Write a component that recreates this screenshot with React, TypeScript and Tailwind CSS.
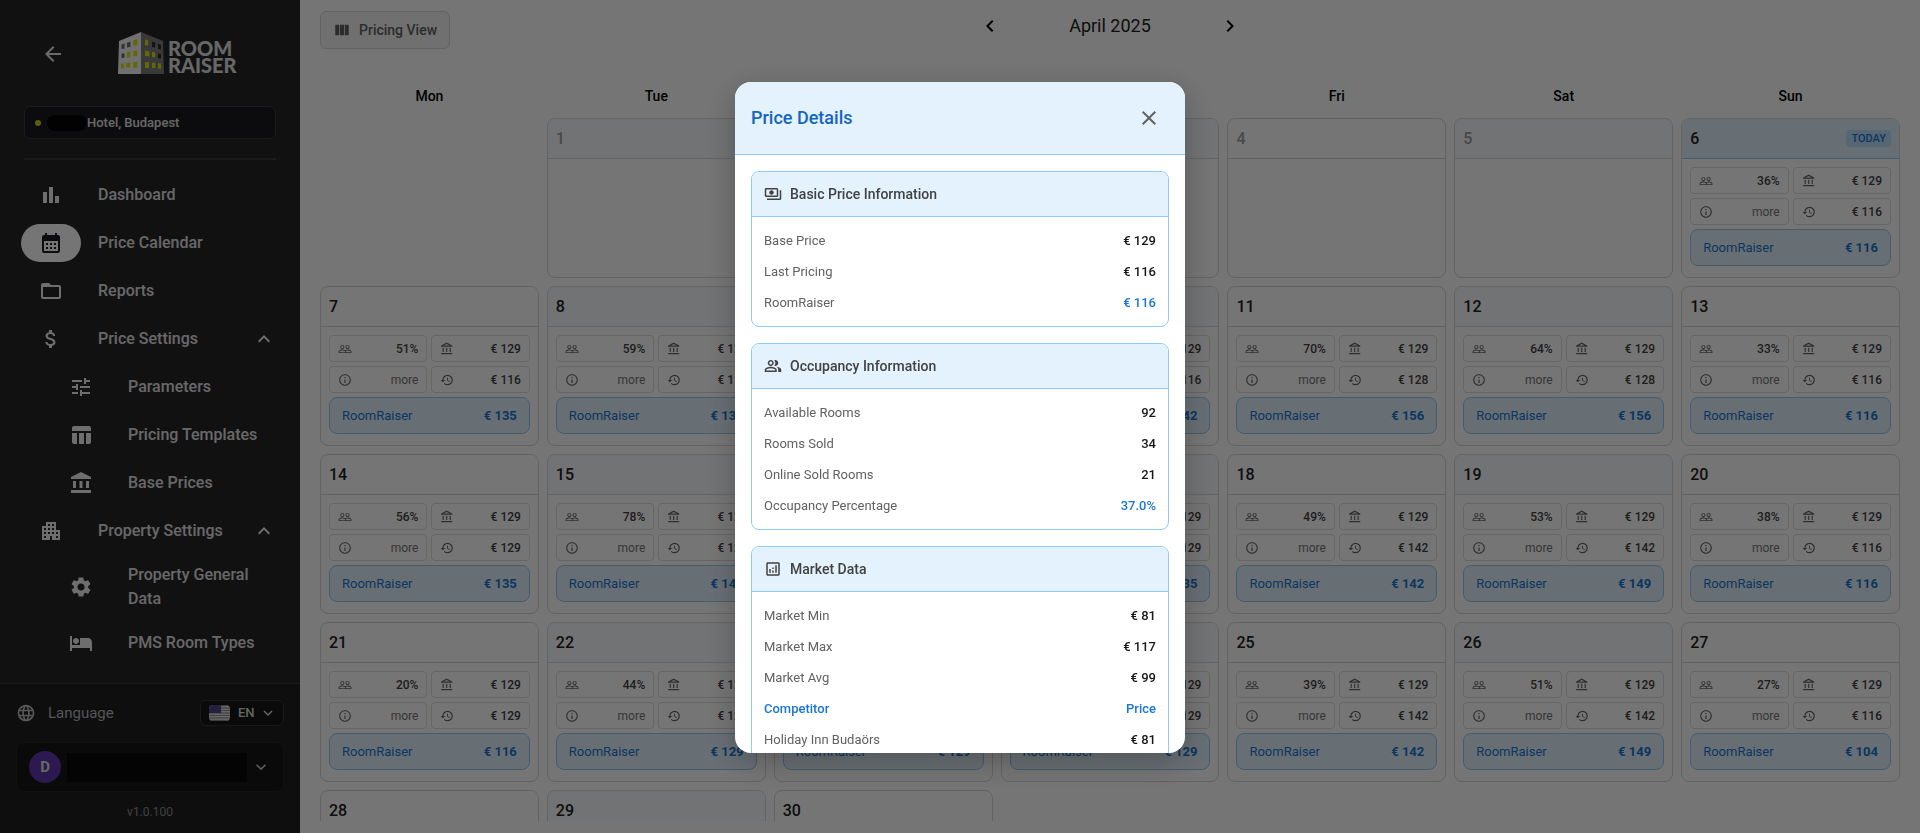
import type { ReactNode } from "react";
import type { IconType } from "react-icons";
import {
  MdAccountBalance,
  MdApartment,
  MdArrowBack,
  MdAttachMoney,
  MdBarChart,
  MdCalendarMonth,
  MdChevronLeft,
  MdChevronRight,
  MdClose,
  MdExpandLess,
  MdExpandMore,
  MdFolderOpen,
  MdHistory,
  MdHotel,
  MdInfoOutline,
  MdLanguage,
  MdOutlineAccountBalance,
  MdOutlineAnalytics,
  MdOutlinePayments,
  MdOutlinePeopleAlt,
  MdPeopleOutline,
  MdSettings,
  MdTableChart,
  MdTune,
  MdViewColumn,
} from "react-icons/md";

type NavItem = { label: string; icon: IconType; active?: boolean; children?: NavItem[] };

const nav: NavItem[] = [
  { label: "Dashboard", icon: MdBarChart },
  { label: "Price Calendar", icon: MdCalendarMonth, active: true },
  { label: "Reports", icon: MdFolderOpen },
  {
    label: "Price Settings",
    icon: MdAttachMoney,
    children: [
      { label: "Parameters", icon: MdTune },
      { label: "Pricing Templates", icon: MdTableChart },
      { label: "Base Prices", icon: MdAccountBalance },
    ],
  },
  {
    label: "Property Settings",
    icon: MdApartment,
    children: [
      { label: "Property General Data", icon: MdSettings },
      { label: "PMS Room Types", icon: MdHotel },
    ],
  },
];

const weekdays = ["Mon", "Tue", "Wed", "Thu", "Fri", "Sat", "Sun"];
const TODAY = 6;

type DayPrice = { occ: number; base: number; last: number; rr: number };

const p = (occ: number, base: number, last: number, rr: number): DayPrice => ({ occ, base, last, rr });

const prices: Record<number, DayPrice> = {
  6: p(36, 129, 116, 116),
  7: p(51, 129, 116, 135),
  8: p(59, 129, 116, 135),
  9: p(62, 129, 116, 135),
  10: p(66, 129, 116, 142),
  11: p(70, 129, 128, 156),
  12: p(64, 129, 128, 156),
  13: p(33, 129, 116, 116),
  14: p(56, 129, 129, 135),
  15: p(78, 129, 129, 149),
  16: p(60, 129, 129, 142),
  17: p(52, 129, 129, 135),
  18: p(49, 129, 142, 142),
  19: p(53, 129, 142, 149),
  20: p(38, 129, 116, 116),
  21: p(20, 129, 129, 116),
  22: p(44, 129, 129, 129),
  23: p(37, 129, 116, 129),
  24: p(41, 129, 129, 129),
  25: p(39, 129, 142, 142),
  26: p(51, 129, 142, 149),
  27: p(27, 129, 116, 104),
  28: p(22, 129, 129, 116),
  29: p(25, 129, 129, 116),
  30: p(31, 129, 129, 129),
};

function Logo() {
  return (
    <div className="flex items-center gap-1">
      <svg className="h-[42px] w-[46px]" viewBox="0 0 46 42" aria-hidden="true">
        <path d="M1 9 23 0v42H0z" fill="#f4f4f4" />
        <path d="M23 0l22 9 1 33H23z" fill="#7d7d7d" />
        <g fill="#6e6e6e">
          <path d="M3.500 12.500l3-1v5l-3 .6zM9 10.800l3.400-1v5l-3.400.6zM3.500 21.800l3-.6v4.600l-3 .4z" />
        </g>
        <g fill="#2a2a2e">
          <path d="M34 9.500l3.200 1v5l-3.200-.6zM40 11.700l3 1v4.800l-3-.6zM40 21.500l3 .6v4.500l-3-.4z" />
        </g>
        <g fill="#dde010">
          <path d="M15.300 8.300l4-1.200v6l-4 .7zM9 20.300l3.400-.6v5.600l-3.400.5zM15.300 19l4-.7v5.700l-4 .5zM3 31.500l3-.3v5.200H3zM8.500 31l3.800-.4v5H8zM15.300 30.200l4-.4v6h-4z" />
          <path d="M27 7.200l3.200 1v5.500L27 13zM27 18.500l4.400.8v5.300l-4.400-.5zM34 19.800l3.200.6v5l-3.200-.4zM27 30h4v6h-4zM34 30.500l3.400.4v5.100H34zM40 31.200l3 .3v5.200l-3-.4z" />
        </g>
      </svg>
      <span className="pt-2 font-[Lato] text-xl leading-[17px] font-black text-[#e0e0e0]">
        <span className="block">ROOM</span>
        <span className="block">RAISER</span>
      </span>
    </div>
  );
}

function UsFlag() {
  return (
    <svg className="h-4 w-[21px] rounded-sm" viewBox="0 0 21 16" preserveAspectRatio="none" aria-hidden="true">
      <rect width="21" height="16" fill="#eee" />
      {[0, 2, 4, 6, 8, 10, 12].map((i) => (
        <rect key={i} y={i * 1.23} width="21" height="1.23" fill="#8c8c8c" />
      ))}
      <rect width="12" height="8" fill="#51478c" />
    </svg>
  );
}

function NavRow({ item, sub = false }: { item: NavItem; sub?: boolean }) {
  const Icon = item.icon;
  return (
    <a href="#" className={`flex min-h-12 items-center py-2 pr-6 ${sub ? "pl-[51px]" : "pl-[21px]"}`}>
      <span
        className={`-my-2 flex h-[38px] w-[60px] shrink-0 items-center justify-center rounded-full ${
          item.active ? "bg-white text-[#1c1c20]" : "text-[#f0f0f0]"
        }`}
      >
        <Icon className="size-6" aria-hidden="true" />
      </span>
      <span className="flex-1 pl-[17px] font-medium text-[#e2e2e2]">{item.label}</span>
      {item.children ? <MdExpandLess className="size-6 text-[#f0f0f0]" aria-hidden="true" /> : null}
    </a>
  );
}

function Sidebar() {
  return (
    <aside className="flex w-[300px] shrink-0 flex-col bg-[#252529]">
      <div className="flex h-[74px] items-end gap-[53px] pl-[41px]">
        <button type="button" aria-label="Back" className="pb-2 text-[#e8e8e8]">
          <MdArrowBack className="size-6" />
        </button>
        <Logo />
      </div>

      <div className="mx-6 mt-8 flex h-[33px] items-center rounded-md border border-[#3c3c40] bg-[#1c1c1f] px-[10px] text-[13px] font-medium text-[#e2e2e2]">
        <span className="size-[6px] rounded-full bg-[#c9cc20]" />
        <span className="ml-[6px] h-4 w-10 rounded-lg bg-[#060606]" />
        Hotel, Budapest
      </div>
      <div className="mx-6 mt-[19px] border-t-2 border-[#3c3c40]" />

      <nav className="mt-[11px] min-h-0 flex-1 overflow-hidden">
        {nav.map((item) => (
          <div key={item.label}>
            <NavRow item={item} />
            {item.children?.map((c) => <NavRow key={c.label} item={c} sub />)}
          </div>
        ))}
      </nav>

      <div className="border-t border-[#38383c] bg-[#1f1f22] px-4 pt-4 pb-[11px]">
        <div className="flex items-center">
          <MdLanguage className="size-5 text-[#c0c0c0]" aria-hidden="true" />
          <span className="ml-3 text-[15px] text-[#b8b8b8]">Language</span>
          <button
            type="button"
            className="ml-auto flex h-[26px] w-[84px] items-center rounded-md border border-[#38383c] bg-[#161618] pl-2 text-[13px] font-medium text-[#dcdcdc]"
          >
            <UsFlag />
            <span className="ml-2">EN</span>
            <MdExpandMore className="ml-1 size-[18px]" aria-hidden="true" />
          </button>
        </div>
        <button
          type="button"
          aria-label="Account"
          className="mt-4 flex h-[50px] w-full items-center rounded-lg border border-[#26262a] bg-[#161618] px-3"
        >
          <span className="flex size-8 items-center justify-center rounded-full bg-[#5f38ac] text-[15px] font-bold text-[#e2e2e2]">
            D
          </span>
          <span className="ml-[6px] h-[29px] flex-1 bg-[#0a0a0a]" />
          <MdExpandMore className="ml-1 size-5 text-[#c8c8c8]" aria-hidden="true" />
        </button>
        <p className="mt-[10px] text-center text-xs leading-5 text-[#909090]">v1.0.100</p>
      </div>
    </aside>
  );
}

function Stat({ icon: Icon, children }: { icon: IconType; children: ReactNode }) {
  return (
    <div className="flex h-[27px] items-center justify-between rounded border border-[#dedede] px-2 text-xs font-medium text-[#424242]">
      <Icon className="size-[14px] text-[#666666]" aria-hidden="true" />
      {children}
    </div>
  );
}

function DayCell({ day, tinted }: { day: number; tinted: boolean }) {
  const price = prices[day];
  const today = day === TODAY;
  const head = today
    ? "border-[#90caf9] bg-[#e3f2fd]"
    : tinted
      ? "border-[#d8d8d8] bg-[#f8fafd]"
      : "border-[#d8d8d8]";
  return (
    <div className="h-40 overflow-hidden rounded-lg border border-[#d8d8d8]">
      <div className={`flex h-10 items-center justify-between border-b px-2 ${head}`}>
        <span className={`font-medium ${day < TODAY ? "text-[#9e9e9e]" : "text-[#212121]"}`}>{day}</span>
        {today ? (
          <span className="rounded bg-[#bbdefb] px-[5px] text-[11px] leading-[17px] font-medium text-[#1976d2]">
            TODAY
          </span>
        ) : null}
      </div>
      {price ? (
        <div className="grid grid-cols-2 gap-1 p-2">
          <Stat icon={MdPeopleOutline}>{price.occ}%</Stat>
          <Stat icon={MdOutlineAccountBalance}>€ {price.base}</Stat>
          <Stat icon={MdInfoOutline}>
            <button type="button" className="font-normal text-[#757575]">
              more
            </button>
          </Stat>
          <Stat icon={MdHistory}>€ {price.last}</Stat>
          <div className="col-span-2 flex h-[37px] items-center justify-between rounded-lg border border-[#90caf9] bg-[#e3f2fd] px-3 text-[13px] text-[#1976d2]">
            <span>RoomRaiser</span>
            <span className="font-bold">€ {price.rr}</span>
          </div>
        </div>
      ) : null}
    </div>
  );
}

function Calendar() {
  return (
    <main className="flex min-w-0 flex-1 flex-col bg-white px-5 pb-3">
      <header className="grid grid-cols-[1fr_auto_1fr] items-start pt-[11px]">
        <button
          type="button"
          className="flex h-[38px] items-center gap-2 justify-self-start rounded-md border border-[#d8d8d8] bg-[#f5f5f5] px-3 text-sm font-medium text-[#616161]"
        >
          <MdViewColumn className="size-[18px]" aria-hidden="true" />
          Pricing View
        </button>
        <div className="flex h-[30px] w-[264px] items-center justify-between text-black">
          <button type="button" aria-label="Previous month">
            <MdChevronLeft className="size-6" />
          </button>
          <h1 className="text-lg text-[#212121]">April 2025</h1>
          <button type="button" aria-label="Next month">
            <MdChevronRight className="size-6" />
          </button>
        </div>
      </header>

      <div className="mt-[35px] grid grid-cols-7 gap-2 text-center text-sm leading-6 font-medium text-black">
        {weekdays.map((d) => (
          <span key={d}>{d}</span>
        ))}
      </div>

      <div className="mt-[10px] grid min-h-0 flex-1 auto-rows-[160px] grid-cols-7 gap-2 overflow-hidden">
        {/* April 2025 starts on a Tuesday */}
        <div />
        {Array.from({ length: 30 }, (_, i) => i + 1).map((day) => (
          <DayCell key={day} day={day} tinted={day % 7 === 1 || day % 7 === 3 || day % 7 === 5} />
        ))}
      </div>
    </main>
  );
}

type Row = { label: string; value: string; tone?: "blue" | "head" };

const basicRows: Row[] = [
  { label: "Base Price", value: "€ 129" },
  { label: "Last Pricing", value: "€ 116" },
  { label: "RoomRaiser", value: "€ 116", tone: "blue" },
];

const occupancyRows: Row[] = [
  { label: "Available Rooms", value: "92" },
  { label: "Rooms Sold", value: "34" },
  { label: "Online Sold Rooms", value: "21" },
  { label: "Occupancy Percentage", value: "37.0%", tone: "blue" },
];

const marketRows: Row[] = [
  { label: "Market Min", value: "€ 81" },
  { label: "Market Max", value: "€ 117" },
  { label: "Market Avg", value: "€ 99" },
  { label: "Competitor", value: "Price", tone: "head" },
  { label: "Holiday Inn Budaörs", value: "€ 81" },
];

function Section({ title, icon: Icon, rows }: { title: string; icon: IconType; rows: Row[] }) {
  return (
    <section className="shrink-0 overflow-hidden rounded-lg border border-[#90caf9]">
      <h3 className="flex h-[45px] items-center gap-2 border-b border-[#90caf9] bg-[#e3f2fd] px-3 text-sm font-medium text-[#424242]">
        <Icon className="size-[18px]" aria-hidden="true" />
        {title}
      </h3>
      <table className="my-2 w-full text-[13px]">
        <tbody>
          {rows.map((r) => (
            <tr key={r.label} className="h-[31px]">
              <th
                scope="row"
                className={`pl-3 text-left ${r.tone === "head" ? "font-medium text-[#1976d2]" : "font-normal text-[#616161]"}`}
              >
                {r.label}
              </th>
              <td className={`pr-3 text-right font-medium ${r.tone ? "text-[#1976d2]" : "text-[#171717]"}`}>{r.value}</td>
            </tr>
          ))}
        </tbody>
      </table>
    </section>
  );
}

function PriceDetails() {
  return (
    <div className="fixed inset-0 z-50 flex items-start justify-center bg-black/54 pt-[82px] pb-20">
      <div
        role="dialog"
        aria-modal="true"
        aria-labelledby="price-details"
        className="flex max-h-full w-[450px] flex-col overflow-hidden rounded-2xl bg-white shadow-[0_8px_32px_rgba(0,0,0,0.25)]"
      >
        <div className="flex h-[73px] shrink-0 items-center justify-between border-b border-[#90caf9] bg-[#e3f2fd] pr-6 pl-4">
          <h2 id="price-details" className="text-lg font-medium text-[#1565c0]">
            Price Details
          </h2>
          <button type="button" aria-label="Close" className="text-[#616161]">
            <MdClose className="size-6" />
          </button>
        </div>
        <div className="flex min-h-0 flex-col gap-4 overflow-hidden p-4">
          <Section title="Basic Price Information" icon={MdOutlinePayments} rows={basicRows} />
          <Section title="Occupancy Information" icon={MdOutlinePeopleAlt} rows={occupancyRows} />
          <Section title="Market Data" icon={MdOutlineAnalytics} rows={marketRows} />
        </div>
      </div>
    </div>
  );
}

export default function App() {
  return (
    <div className="flex h-screen overflow-hidden font-[Roboto,sans-serif]">
      <Sidebar />
      <Calendar />
      <PriceDetails />
    </div>
  );
}
